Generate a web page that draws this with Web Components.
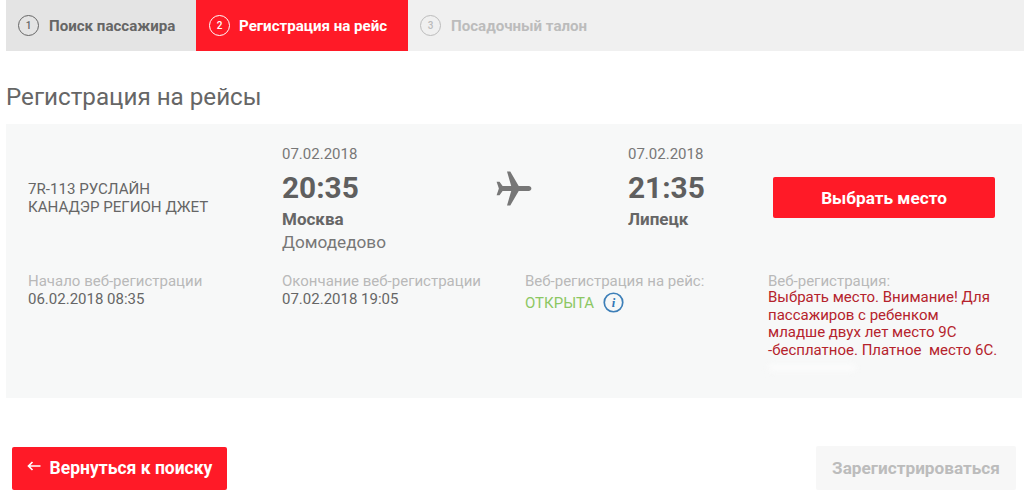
<!DOCTYPE html>
<html lang="ru">
<head>
<meta charset="utf-8">
<title>Регистрация на рейсы</title>
<style>
  html, body { margin: 0; padding: 0; background: #fff; }
  body { font-family: Roboto, "Liberation Sans", sans-serif; color: #666; }
</style>
</head>
<body>
<check-in-page>
  <step-bar>
    <step-item num="1" state="done">Поиск пассажира</step-item>
    <step-item num="2" state="active">Регистрация на рейс</step-item>
    <step-item num="3" state="next">Посадочный талон</step-item>
  </step-bar>
  <page-title>Регистрация на рейсы</page-title>
  <flight-card>
    <div slot="flight">7R-113 РУСЛАЙН<br>КАНАДЭР РЕГИОН ДЖЕТ</div>
    <flight-leg slot="from" date="07.02.2018" time="20:35" city="Москва" airport="Домодедово"></flight-leg>
    <flight-leg slot="to" date="07.02.2018" time="21:35" city="Липецк"></flight-leg>
    <action-button slot="action" kind="seat">Выбрать место</action-button>
    <info-item slot="info" label="Начало веб-регистрации">06.02.2018 08:35</info-item>
    <info-item slot="info" label="Окончание веб-регистрации">07.02.2018 19:05</info-item>
    <info-item slot="info" label="Веб-регистрация на рейс:" kind="status">ОТКРЫТА<info-icon></info-icon></info-item>
    <info-item slot="info" label="Веб-регистрация:" kind="notice">Выбрать место. Внимание! Для пассажиров с ребенком<br>младше двух лет место 9С<br>-бесплатное. Платное&nbsp; место 6С.</info-item>
  </flight-card>
  <page-actions>
    <action-button kind="back"><svg slot="icon" viewBox="0 0 14 10" width="14" height="10"><path d="M13.5 5H1.5M5.5 1 1.5 5l4 4" fill="none" stroke="#fff" stroke-width="1.7"/></svg>Вернуться к поиску</action-button>
    <action-button kind="disabled">Зарегистрироваться</action-button>
  </page-actions>
</check-in-page>

<script>
class CheckInPage extends HTMLElement {
  constructor() {
    super();
    this.attachShadow({mode: 'open'}).innerHTML = `
      <style>
        :host { display: block; width: 1024px; height: 495px; overflow: hidden; }
      </style>
      <slot></slot>`;
  }
}

class StepBar extends HTMLElement {
  constructor() {
    super();
    this.attachShadow({mode: 'open'}).innerHTML = `
      <style>
        :host { display: flex; height: 51px; margin-left: 6px; background: #f0f0f0; }
      </style>
      <slot></slot>`;
  }
}

class StepItem extends HTMLElement {
  constructor() {
    super();
    this.attachShadow({mode: 'open'}).innerHTML = `
      <style>
        :host {
          display: flex; align-items: center; box-sizing: border-box;
          height: 51px; padding: 0 12px; gap: 10px;
          font-size: 15.1px; font-weight: 700; white-space: nowrap;
          color: #666;
        }
        :host([state=done]) { width: 190px; background: #e4e4e4; }
        :host([state=active]) { width: 212px; background: #ff1a27; color: #fff; padding-left: 13px; gap: 9px; }
        :host([state=next]) { color: #bcbcbc; }
        .num {
          box-sizing: border-box; width: 21px; height: 21px; border-radius: 50%;
          border: 1px solid currentColor; display: flex; align-items: center; justify-content: center;
          font-size: 10px; font-weight: 500; flex: none;
        }
      </style>
      <span class="num"></span><slot></slot>`;
    this.shadowRoot.querySelector('.num').textContent = this.getAttribute('num');
  }
}

class PageTitle extends HTMLElement {
  constructor() {
    super();
    this.attachShadow({mode: 'open'}).innerHTML = `
      <style>
        :host {
          display: block; height: 73px; box-sizing: border-box; padding: 30px 0 0 6px;
          font-size: 24.2px; line-height: 32px; font-weight: 400; color: #666;
        }
      </style>
      <slot></slot>`;
  }
}

class FlightCard extends HTMLElement {
  constructor() {
    super();
    this.attachShadow({mode: 'open'}).innerHTML = `
      <style>
        :host {
          display: block; box-sizing: border-box; width: 1016px; height: 274px;
          margin-left: 6px; padding: 20px 0 0 22px; background: #f7f8f8;
        }
        .route { display: grid; grid-template-columns: 254px 215px 131px 145px 222px; height: 128px; }
        .name { align-self: start; padding-top: 36px; font-size: 15.1px; line-height: 18px; color: #666; }
        .plane { padding-top: 25px; }
        .plane svg { display: block; width: 39px; height: 39px; margin-left: -3px; }
        .action { padding-top: 33px; }
        .infos { display: grid; grid-template-columns: 254px 243px 243px 232px; }
      </style>
      <div class="route">
        <div class="name"><slot name="flight"></slot></div>
        <slot name="from"></slot>
        <div class="plane">
          <svg viewBox="0 0 24 24"><path fill="#777" d="M23 12c0-.9-.8-1.5-1.6-1.5h-6.2L10 1.6H8l2.6 8.9H5.3L3.4 7.9H1.6L3 12l-1.4 4.1h1.8l1.9-2.6h5.3L8 22.4h2l5.2-8.9h6.2c.8 0 1.6-.6 1.6-1.5z"/></svg>
        </div>
        <slot name="to"></slot>
        <div class="action"><slot name="action"></slot></div>
      </div>
      <div class="infos"><slot name="info"></slot></div>`;
  }
}

class FlightLeg extends HTMLElement {
  constructor() {
    super();
    this.attachShadow({mode: 'open'}).innerHTML = `
      <style>
        :host { display: block; color: #666; white-space: nowrap; }
        .date { font-size: 15px; line-height: 20px; color: #777; }
        .time { font-size: 29.8px; line-height: 34px; font-weight: 700; margin-top: 7px; color: #5f5f5f; }
        .city { font-size: 17px; line-height: 20px; font-weight: 700; margin-top: 4px; }
        .airport { font-size: 17.2px; line-height: 24px; color: #777; margin-top: 1px; }
      </style>
      <div class="date"></div>
      <div class="time"></div>
      <div class="city"></div>
      <div class="airport"></div>`;
    const root = this.shadowRoot;
    for (const key of ['date', 'time', 'city', 'airport']) {
      root.querySelector('.' + key).textContent = this.getAttribute(key) || '';
    }
  }
}

class InfoItem extends HTMLElement {
  constructor() {
    super();
    this.attachShadow({mode: 'open'}).innerHTML = `
      <style>
        :host { display: block; font-size: 15px; line-height: 18px; }
        .label { color: #b9b9b9; white-space: nowrap; }
        .value { color: #666; display: flex; align-items: center; gap: 9px; }
        :host([kind=status]) .value { color: #8cc763; margin-top: 2px; }
        :host([kind=notice]) .value { display: block; color: #b5232c; line-height: 17.7px; width: 234px; margin-top: -1px; }
        .smudge {
          display: none; width: 88px; height: 7px; margin-top: 4px; border-radius: 4px;
          background: #fcfcfc; filter: blur(3px);
        }
        :host([kind=notice]) .smudge { display: block; }
      </style>
      <div class="label"></div>
      <div class="value"><slot></slot></div>
      <div class="smudge"></div>`;
    this.shadowRoot.querySelector('.label').textContent = this.getAttribute('label');
  }
}

class InfoIcon extends HTMLElement {
  constructor() {
    super();
    this.attachShadow({mode: 'open'}).innerHTML = `
      <style>
        :host { display: inline-flex; vertical-align: middle; }
        svg { display: block; width: 21px; height: 21px; }
        text { font: italic 700 12px "Liberation Serif", serif; fill: #2f77b5; }
      </style>
      <svg viewBox="0 0 20 20">
        <circle cx="10" cy="10" r="8.8" fill="none" stroke="#3d7fb8" stroke-width="1.6"/>
        <text x="10" y="14.3" text-anchor="middle">i</text>
      </svg>`;
  }
}

class ActionButton extends HTMLElement {
  constructor() {
    super();
    this.attachShadow({mode: 'open'}).innerHTML = `
      <style>
        :host {
          display: flex; align-items: center; justify-content: center; box-sizing: border-box;
          font-size: 17.2px; font-weight: 700; white-space: nowrap; border-radius: 2px;
          background: #ff1a27; color: #fff; height: 41px;
        }
        :host([kind=back]) { width: 215px; height: 43px; gap: 9px; font-size: 17.5px; }
        :host([kind=disabled]) { width: 200px; height: 44px; background: #f7f7f7; color: #bcbcbc; }
        ::slotted([slot=icon]) { margin-bottom: 5px; flex: none; }
      </style>
      <slot name="icon"></slot><slot></slot>`;
  }
}

class PageActions extends HTMLElement {
  constructor() {
    super();
    this.attachShadow({mode: 'open'}).innerHTML = `
      <style>
        :host {
          display: flex; justify-content: space-between; align-items: center;
          margin-top: 48px; padding: 0 8px 0 12px;
        }
      </style>
      <slot></slot>`;
  }
}

customElements.define('check-in-page', CheckInPage);
customElements.define('step-bar', StepBar);
customElements.define('step-item', StepItem);
customElements.define('page-title', PageTitle);
customElements.define('flight-card', FlightCard);
customElements.define('flight-leg', FlightLeg);
customElements.define('info-item', InfoItem);
customElements.define('info-icon', InfoIcon);
customElements.define('action-button', ActionButton);
customElements.define('page-actions', PageActions);
</script>
</body>
</html>
